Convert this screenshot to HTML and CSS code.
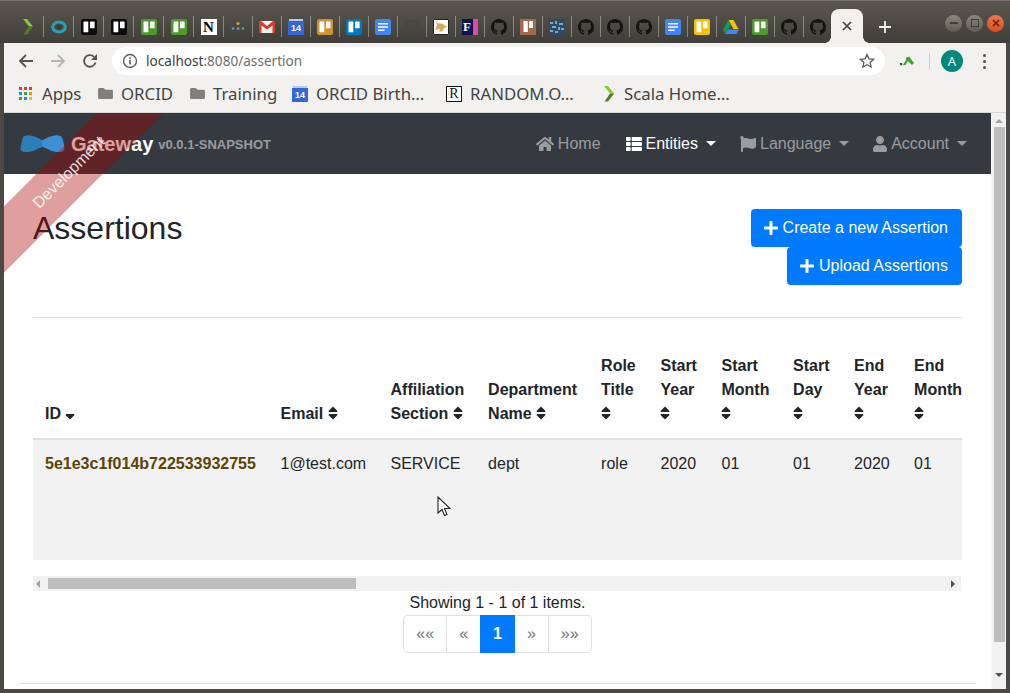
FILE: index.html
```html
<!DOCTYPE html>
<html lang="en">
<head>
<meta charset="utf-8">
<title>Assertions</title>
<link rel="stylesheet" href="styles.css">
</head>
<body>
<svg class="defs" width="0" height="0">
	<symbol id="i-trello" viewBox="0 0 16 16">
		<rect width="16" height="16" rx="2" fill="currentColor"/>
		<rect x="2.5" y="2.5" width="4.8" height="10.8" rx=".6" fill="#fff"/>
		<rect x="9" y="2.5" width="4.6" height="6.8" rx=".6" fill="#fff"/>
	</symbol>
	<symbol id="i-github" viewBox="0 0 16 16">
		<path fill="#15130f" d="M8 0C3.58 0 0 3.58 0 8c0 3.54 2.29 6.53 5.47 7.59.4.07.55-.17.55-.38 0-.19-.01-.82-.01-1.49-2.01.37-2.53-.49-2.69-.94-.09-.23-.48-.94-.82-1.13-.28-.15-.68-.52-.01-.53.63-.01 1.08.58 1.23.82.72 1.21 1.87.87 2.33.66.07-.52.28-.87.51-1.07-1.78-.2-3.64-.89-3.64-3.95 0-.87.31-1.59.82-2.15-.08-.2-.36-1.02.08-2.12 0 0 .67-.21 2.2.82.64-.18 1.32-.27 2-.27.68 0 1.36.09 2 .27 1.53-1.04 2.2-.82 2.2-.82.44 1.1.16 1.92.08 2.12.51.56.82 1.27.82 2.15 0 3.07-1.87 3.75-3.65 3.95.29.25.54.73.54 1.48 0 1.07-.01 1.93-.01 2.2 0 .21.15.46.55.38A8.013 8.013 0 0016 8c0-4.42-3.58-8-8-8z"/>
	</symbol>
	<symbol id="i-docs" viewBox="0 0 16 16">
		<rect width="16" height="16" rx="2" fill="#4285f4"/>
		<path fill="#fff" d="M3 4h10v1.6H3zM3 7.2h10v1.6H3zM3 10.4h6.5V12H3z"/>
	</symbol>
	<symbol id="i-chevron" viewBox="0 0 12 16">
		<path fill="#8bc53f" d="M1 0h4l6 7.500H7z"/>
		<path fill="#4f7f1c" d="M7 7.500h4L5 15.500H1.500L4 12z"/>
	</symbol>
	<symbol id="i-cal" viewBox="0 0 16 16">
		<path fill="#3367d6" d="M0 2h16v14H0z"/>
		<path fill="#bcc8e6" d="M1 0h14v2H1z"/>
	</symbol>
	<symbol id="i-folder" viewBox="0 0 16 14">
		<path fill="#7f7f7f" d="M1.500 1h4.500l2 2h6.500a1.500 1.500 0 0 1 1.500 1.500v7a1.500 1.500 0 0 1-1.500 1.500h-13A1.500 1.500 0 0 1 0 11.500v-9A1.500 1.500 0 0 1 1.500 1z"/>
	</symbol>
	<symbol id="i-sort" viewBox="0 0 320 512">
		<path fill="currentColor" d="M41 288h238c21.400 0 32.100 25.900 17 41L177 448c-9.400 9.400-24.600 9.400-33.900 0L24 329c-15.100-15.100-4.400-41 17-41zm255-105L177 64c-9.400-9.400-24.600-9.400-33.900 0L24 183c-15.100 15.100-4.400 41 17 41h238c21.400 0 32.100-25.900 17-41z"/>
	</symbol>
	<symbol id="i-plus" viewBox="0 0 448 512">
		<path fill="currentColor" d="M416 208H272V64c0-17.670-14.330-32-32-32h-32c-17.670 0-32 14.330-32 32v144H32c-17.670 0-32 14.330-32 32v32c0 17.670 14.330 32 32 32h144v144c0 17.670 14.330 32 32 32h32c17.670 0 32-14.330 32-32V304h144c17.670 0 32-14.330 32-32v-32c0-17.670-14.330-32-32-32z"/>
	</symbol>
</svg>

<div class="tabstrip">
	<div class="tab wide"><svg class="fav-chev"><use href="#i-chevron"/></svg></div>
	<div class="tab wide">
		<svg class="fav" viewBox="0 0 16 16"><ellipse cx="8" cy="8" rx="6.300" ry="5" fill="none" stroke="#2b9fb3" stroke-width="3"/><circle cx="8" cy="8" r="2.400" fill="#3b3a36"/></svg>
	</div>
	<div class="tab wide"><svg class="fav trello-black"><use href="#i-trello"/></svg></div>
	<div class="tab wide"><svg class="fav trello-black"><use href="#i-trello"/></svg></div>
	<div class="tab wide"><svg class="fav trello-green"><use href="#i-trello"/></svg></div>
	<div class="tab wide"><svg class="fav trello-green"><use href="#i-trello"/></svg></div>
	<div class="tab wide"><span class="fav-notion">N</span></div>
	<div class="tab">
		<svg class="fav" viewBox="0 0 16 16"><circle cx="8" cy="4.500" r="1.500" fill="#d2a24c"/><circle cx="3" cy="9.500" r="1.300" fill="#5b9bb5"/><circle cx="8" cy="9.500" r="1.500" fill="#5b9bb5"/><circle cx="13" cy="9.500" r="1.300" fill="#5b9bb5"/></svg>
	</div>
	<div class="tab">
		<svg class="fav" viewBox="0 0 16 16"><path fill="#f1efec" d="M0 2h16v12H0z"/><path fill="#d23f31" d="M0 2h2l6 5 6-5h2v12h-2.500V6.500L8 10.500 2.500 6.500V14H0z"/></svg>
	</div>
	<div class="tab"><span class="fav-cal"><svg class="fav-bg"><use href="#i-cal"/></svg><span class="fav-cal-num">14</span></span></div>
	<div class="tab"><svg class="fav trello-orange"><use href="#i-trello"/></svg></div>
	<div class="tab"><svg class="fav trello-blue"><use href="#i-trello"/></svg></div>
	<div class="tab"><svg class="fav"><use href="#i-docs"/></svg></div>
	<div class="tab">
		<svg class="fav" viewBox="0 0 16 16"><circle cx="8" cy="8" r="6" fill="none" stroke="#474640" stroke-width="3"/></svg>
	</div>
	<div class="tab">
		<svg class="fav" viewBox="0 0 16 16"><path fill="#fff" d="M0 0h16v16H0z"/><path fill="none" stroke="#222" d="M.5.500h15v15H.500z"/><path fill="#d9a95b" d="M2 11l2-5-1-3 3 1.500h3l3 2 2 1-3 2-2 3H6l1-2.500z"/></svg>
	</div>
	<div class="tab">
		<svg class="fav" viewBox="0 0 16 16"><path fill="#0b1450" d="M0 0h11v16H0z"/><path fill="#e0489b" d="M11 0h5v16h-5z"/></svg>
		<span class="fav-f">F</span>
	</div>
	<div class="tab"><svg class="fav"><use href="#i-github"/></svg></div>
	<div class="tab">
		<svg class="fav" viewBox="0 0 16 16"><path fill="#a06a4c" d="M0 0h16v16H0z"/><rect x="3.500" y="2" width="4.300" height="11" rx=".5" fill="#fff"/><rect x="9" y="2" width="4" height="7" rx=".5" fill="#fff"/></svg>
	</div>
	<div class="tab">
		<svg class="fav" viewBox="0 0 16 16"><path fill="#2f4a63" d="M0 0h16v16H0z"/><path fill="#7fa8c4" d="M1 3h3v2H1zM6 2h2v3H6zM10 4h4v2h-4zM3 7h4v2H3zM9 8h2v3H9zM12 9h3v2h-3zM1 11h3v2H1zM6 12h3v2H6z"/></svg>
	</div>
	<div class="tab"><svg class="fav"><use href="#i-github"/></svg></div>
	<div class="tab"><svg class="fav"><use href="#i-github"/></svg></div>
	<div class="tab"><svg class="fav"><use href="#i-github"/></svg></div>
	<div class="tab"><svg class="fav"><use href="#i-docs"/></svg></div>
	<div class="tab"><svg class="fav trello-yellow"><use href="#i-trello"/></svg></div>
	<div class="tab">
		<svg class="fav" viewBox="0 0 16 16"><path fill="#ffc107" d="M5.500 1h5l5 9h-5z"/><path fill="#0f9d58" d="M5.500 1L0 10.500 2.500 15l5.300-9.500z"/><path fill="#4285f4" d="M5 10.500h11L13.500 15h-11z"/></svg>
	</div>
	<div class="tab"><svg class="fav trello-green"><use href="#i-trello"/></svg></div>
	<div class="tab"><svg class="fav"><use href="#i-github"/></svg></div>
	<div class="tab"><svg class="fav"><use href="#i-github"/></svg></div>

	<div class="tab-active">
		<svg width="10" height="10" viewBox="0 0 10 10"><path d="M1 1l8 8M9 1l-8 8" stroke="#45433f" stroke-width="1.700"/></svg>
	</div>
	<svg class="newtab" width="12" height="12" viewBox="0 0 12 12"><path d="M6 0v12M0 6h12" stroke="#f2f1f0" stroke-width="1.800"/></svg>

	<div class="winbtns">
		<span class="winbtn"><span class="win-min"></span></span>
		<span class="winbtn"><span class="win-max"></span></span>
		<span class="winbtn win-close">
			<svg width="8" height="8" viewBox="0 0 8 8"><path d="M1 1l6 6M7 1L1 7" stroke="#5c2410" stroke-width="1.500"/></svg>
		</span>
	</div>
</div>

<div class="toolbar">
	<span class="toolbtn">
		<svg width="16" height="16" viewBox="0 0 16 16"><path d="M15 8H2M8 2L2 8l6 6" fill="none" stroke="#55534f" stroke-width="1.800"/></svg>
	</span>
	<span class="toolbtn">
		<svg width="16" height="16" viewBox="0 0 16 16"><path d="M1 8h13M8 2l6 6-6 6" fill="none" stroke="#b5b4b2" stroke-width="1.800"/></svg>
	</span>
	<span class="toolbtn">
		<svg width="16" height="16" viewBox="0 0 16 16"><path d="M13.500 9.500A5.800 5.800 0 1 1 12 3.800" fill="none" stroke="#55534f" stroke-width="1.800"/><path d="M15 1v6H9z" fill="#55534f"/></svg>
	</span>
	<div class="omnibox">
		<svg width="16" height="16" viewBox="0 0 16 16"><circle cx="8" cy="8" r="6.500" fill="none" stroke="#5f5d59" stroke-width="1.400"/><path d="M7.200 7h1.600v4.500H7.200zM7.200 4.200h1.600v1.600H7.200z" fill="#5f5d59"/></svg>
		<span class="url">localhost<span class="url-rest">:8080/assertion</span></span>
		<svg class="star" width="16" height="16" viewBox="0 0 16 16"><path d="M8 1.500l1.950 4.300 4.650.5-3.500 3.100 1 4.600L8 11.700l-4.100 2.300 1-4.600-3.500-3.100 4.650-.5z" fill="none" stroke="#5f5d59" stroke-width="1.300"/></svg>
	</div>
	<span class="ext">
		<svg width="14" height="9" viewBox="0 0 14 9"><path fill="#1e5c1a" d="M0 6h2.200v2.200H0z"/><path fill="#3aa52f" d="M3 8l3-5h2.500l-3 5zM5.500 2L7 0h2.500l4.500 6-2 2z"/></svg>
	</span>
	<span class="toolsep"></span>
	<span class="avatar-wrap"><span class="avatar">A</span></span>
	<span class="menudots"><i></i><i></i><i></i></span>
</div>

<div class="bookmarks">
	<span class="bm">
		<svg class="bm-apps" width="14" height="14" viewBox="0 0 14 14">
			<path fill="#e53935" d="M0 0h3v3H0zM5 0h3v3H5zM10 0h3v3h-3z"/>
			<path fill="#1e88e5" d="M0 5h3v3H0z"/><path fill="#43a047" d="M5 5h3v3H5z"/><path fill="#fb8c00" d="M10 5h3v3h-3z"/>
			<path fill="#43a047" d="M0 10h3v3H0z"/><path fill="#1e88e5" d="M5 10h3v3H5z"/><path fill="#fdb300" d="M10 10h3v3h-3z"/>
		</svg>
		<span class="bm-label">Apps</span>
	</span>
	<span class="bm"><svg class="bm-icon" width="15" height="13"><use href="#i-folder"/></svg><span class="bm-label">ORCID</span></span>
	<span class="bm"><svg class="bm-icon" width="15" height="13"><use href="#i-folder"/></svg><span class="bm-label">Training</span></span>
	<span class="bm"><span class="fav-cal"><svg class="fav-bg"><use href="#i-cal"/></svg><span class="fav-cal-num">14</span></span><span class="bm-label">ORCID Birth…</span></span>
	<span class="bm"><span class="fav-r">R</span><span class="bm-label">RANDOM.O…</span></span>
	<span class="bm"><svg class="bm-chev"><use href="#i-chevron"/></svg><span class="bm-label">Scala Home…</span></span>
</div>

<div class="page">
	<div class="viewport">
		<div class="ribbon"><span class="ribbon-text">Development</span></div>

		<nav class="navbar">
			<a class="brand">
				<svg class="logo" width="45" height="19" viewBox="0 0 45 19">
					<path fill="#2c7db8" d="M6 1.500C12 .5 17 3.500 23 6.500v6C17 15 12 18.500 5 18c-3 0-4.500-1.500-4.500-3.500C1 11 1.500 7 3 3.500 3.500 2.500 4.500 2 6 1.500z"/>
					<path fill="#3f8fd4" d="M39 1.500C33 .5 28 3.500 22 6.500v6c6 2.500 11 6 18 5.500 3 0 4.500-1.500 4.500-3.500C44 11 43.500 7 42 3.500 41.500 2.500 40.500 2 39 1.500z"/>
				</svg>
				<span class="brand-title">Gateway</span>
				<span class="brand-version">v0.0.1-SNAPSHOT</span>
			</a>
			<ul class="nav">
				<li class="nav-item nav-home">
					<svg class="nav-icon home-icon" viewBox="0 0 576 512"><path fill="currentColor" d="M280.370 148.260L96 300.110V464a16 16 0 0 0 16 16l112.060-.29a16 16 0 0 0 15.920-16V368a16 16 0 0 1 16-16h64a16 16 0 0 1 16 16v95.640a16 16 0 0 0 16 16.050L464 480a16 16 0 0 0 16-16V300L295.670 148.260a12.190 12.190 0 0 0-15.300 0zM571.600 251.470L488 182.560V44.050a12 12 0 0 0-12-12h-56a12 12 0 0 0-12 12v72.610L318.470 43a48 48 0 0 0-61 0L4.340 251.470a12 12 0 0 0-1.600 16.900l25.500 31A12 12 0 0 0 45.150 301l235.220-193.740a12.190 12.190 0 0 1 15.300 0L530.900 301a12 12 0 0 0 16.900-1.600l25.500-31a12 12 0 0 0-1.700-16.930z"/></svg>
					<span>Home</span>
				</li>
				<li class="nav-item active">
					<svg class="nav-icon" viewBox="0 0 512 512"><path fill="currentColor" d="M149.333 216v80c0 13.255-10.745 24-24 24H24c-13.255 0-24-10.745-24-24v-80c0-13.255 10.745-24 24-24h101.333c13.255 0 24 10.745 24 24zM0 376v80c0 13.255 10.745 24 24 24h101.333c13.255 0 24-10.745 24-24v-80c0-13.255-10.745-24-24-24H24c-13.255 0-24 10.745-24 24zM125.333 32H24C10.745 32 0 42.745 0 56v80c0 13.255 10.745 24 24 24h101.333c13.255 0 24-10.745 24-24V56c0-13.255-10.745-24-24-24zm80 448H488c13.255 0 24-10.745 24-24v-80c0-13.255-10.745-24-24-24H205.333c-13.255 0-24 10.745-24 24v80c0 13.255 10.745 24 24 24zm-24-424v80c0 13.255 10.745 24 24 24H488c13.255 0 24-10.745 24-24V56c0-13.255-10.745-24-24-24H205.333c-13.255 0-24 10.745-24 24zm24 264H488c13.255 0 24-10.745 24-24v-80c0-13.255-10.745-24-24-24H205.333c-13.255 0-24 10.745-24 24v80c0 13.255 10.745 24 24 24z"/></svg>
					<span>Entities</span><i class="caret"></i>
				</li>
				<li class="nav-item">
					<svg class="nav-icon" viewBox="0 0 512 512"><path fill="currentColor" d="M349.565 98.783C295.978 98.783 251.721 64 184.348 64c-24.955 0-47.309 4.384-68.045 12.013a55.947 55.947 0 0 0 3.586-23.562C118.117 24.015 94.806 1.206 66.338.048 34.345-1.254 8 24.296 8 56c0 19.026 9.497 35.825 24 45.945V488c0 13.255 10.745 24 24 24h16c13.255 0 24-10.745 24-24v-94.400c28.311-12.064 63.582-22.122 114.435-22.122 53.588 0 97.844 34.783 165.217 34.783 48.169 0 86.667-16.294 122.505-40.858C506.840 359.452 512 349.571 512 339.045v-243.100c0-23.393-24.269-38.870-45.485-29.016-34.338 15.948-76.454 31.854-116.950 31.854z"/></svg>
					<span>Language</span><i class="caret"></i>
				</li>
				<li class="nav-item">
					<svg class="nav-icon user-icon" viewBox="0 0 448 512"><path fill="currentColor" d="M224 256c70.700 0 128-57.300 128-128S294.700 0 224 0 96 57.300 96 128s57.300 128 128 128zm89.600 32h-16.700c-22.200 10.200-46.900 16-72.900 16s-50.600-5.800-72.900-16h-16.700C60.200 288 0 348.200 0 422.400V464c0 26.500 21.500 48 48 48h352c26.500 0 48-21.500 48-48v-41.600c0-74.200-60.200-134.400-134.400-134.400z"/></svg>
					<span>Account</span><i class="caret"></i>
				</li>
			</ul>
		</nav>

		<main class="content">
			<div class="title-row">
				<h2 class="title">Assertions</h2>
				<div class="actions">
					<a class="btn"><svg class="btn-icon"><use href="#i-plus"/></svg>Create a new Assertion</a>
					<a class="btn"><svg class="btn-icon"><use href="#i-plus"/></svg>Upload Assertions</a>
				</div>
			</div>
			<hr class="rule">

			<div class="table-wrap">
				<table class="table">
					<colgroup>
						<col class="c-id"><col class="c-email"><col class="c-section"><col class="c-dept">
						<col class="c-role"><col class="c-start-y"><col class="c-start-m"><col class="c-start-d">
						<col class="c-end-y"><col class="c-end-m"><col class="c-rest">
					</colgroup>
					<thead>
						<tr>
							<th>ID <svg class="sort" viewBox="0 0 320 512"><path fill="currentColor" d="M41 288h238c21.400 0 32.100 25.900 17 41L177 448c-9.400 9.400-24.600 9.400-33.900 0L24 329c-15.100-15.100-4.400-41 17-41z"/></svg></th>
							<th>Email <svg class="sort"><use href="#i-sort"/></svg></th>
							<th>Affiliation Section <svg class="sort"><use href="#i-sort"/></svg></th>
							<th>Department Name <svg class="sort"><use href="#i-sort"/></svg></th>
							<th>Role Title <svg class="sort"><use href="#i-sort"/></svg></th>
							<th>Start Year <svg class="sort"><use href="#i-sort"/></svg></th>
							<th>Start Month <svg class="sort"><use href="#i-sort"/></svg></th>
							<th>Start Day <svg class="sort"><use href="#i-sort"/></svg></th>
							<th>End Year <svg class="sort"><use href="#i-sort"/></svg></th>
							<th>End Month <svg class="sort"><use href="#i-sort"/></svg></th>
							<th></th>
						</tr>
					</thead>
					<tbody>
						<tr>
							<td><a class="id-link">5e1e3c1f014b722533932755</a></td>
							<td>1@test.com</td>
							<td>SERVICE</td>
							<td>dept</td>
							<td>role</td>
							<td>2020</td>
							<td>01</td>
							<td>01</td>
							<td>2020</td>
							<td>01</td>
							<td></td>
						</tr>
					</tbody>
				</table>
			</div>
			<div class="hscroll">
				<i class="arrow-left"></i>
				<span class="hscroll-track"><span class="hscroll-thumb"></span></span>
				<i class="arrow-right"></i>
			</div>

			<div class="count">Showing 1 - 1 of 1 items.</div>
			<ul class="pagination">
				<li class="page-link">««</li>
				<li class="page-link">«</li>
				<li class="page-link current">1</li>
				<li class="page-link">»</li>
				<li class="page-link">»»</li>
			</ul>
			<hr class="footer-rule">
		</main>

		<svg class="cursor" width="14" height="21" viewBox="0 0 14 21"><path d="M1 1v16l4-3.500 2.500 6 2.500-1-2.500-6H13z" fill="#fff" stroke="#222" stroke-width="1.100"/></svg>
	</div>

	<div class="vscroll">
		<i class="arrow-up"></i>
		<span class="vscroll-thumb"></span>
		<i class="arrow-down"></i>
	</div>
</div>
</body>
</html>
```

FILE: styles.css
```css
* {
	box-sizing: border-box;
	padding: 0;
	margin: 0;
}
html, body {
	width: 1010px;
	height: 693px;
	overflow: hidden;
}
body {
	background: #4b4943;
	font-family: "Liberation Sans", Arial, sans-serif;
	font-size: 16px;
	line-height: 24px;
	color: #212529;
}
li {
	list-style: none;
}
.defs {
	display: block;
	height: 0;
}

/* browser tabs */
.tabstrip {
	display: flex;
	align-items: center;
	height: 43px;
	padding: 10px 0 0 13px;
	background: linear-gradient(#5b5750, #403e39);
	border-top: 1px solid #77746d;
}
.tab {
	position: relative;
	display: flex;
	align-items: center;
	justify-content: center;
	width: 29px;
	height: 21px;
	border-left: 1px solid rgba(255, 255, 255, .35);
	margin-top: -1px;
}
.tab.wide {
	width: 30px;
}
.tab:first-child {
	border-left: 0;
}
.fav {
	width: 16px;
	height: 16px;
}
.fav-chev {
	width: 12px;
	height: 16px;
}
.trello-black { color: #0c0c0c; }
.trello-green { color: #4c9a2a; }
.trello-orange { color: #d29034; }
.trello-blue { color: #0079bf; }
.trello-yellow { color: #f2c200; }
.fav-notion {
	width: 16px;
	height: 16px;
	background: #fff;
	color: #000;
	font: bold 15px/16px "Liberation Serif", serif;
	text-align: center;
}
.fav-f {
	position: absolute;
	left: 7px;
	top: 2px;
	color: #fff;
	font: bold 13px/17px "Liberation Serif", serif;
}
.fav-cal {
	position: relative;
	display: inline-block;
	width: 16px;
	height: 16px;
}
.fav-bg {
	display: block;
	width: 16px;
	height: 16px;
}
.fav-cal-num {
	position: absolute;
	left: 0;
	right: 0;
	top: 4px;
	color: #fff;
	font: bold 9px/11px "Liberation Sans", sans-serif;
	text-align: center;
}
.tab-active {
	position: relative;
	display: flex;
	align-items: center;
	justify-content: center;
	align-self: flex-end;
	width: 32px;
	height: 34px;
	margin-left: -1px;
	padding-bottom: 1px;
	background: #f2f1f0;
	border-radius: 8px 8px 0 0;
}
/* curved feet of the active tab */
.tab-active::before,
.tab-active::after {
	content: "";
	position: absolute;
	bottom: 0;
	width: 6px;
	height: 6px;
}
.tab-active::before {
	left: -6px;
	background: radial-gradient(circle at 0 0, transparent 5.500px, #f2f1f0 6px);
}
.tab-active::after {
	right: -6px;
	background: radial-gradient(circle at 100% 0, transparent 5.500px, #f2f1f0 6px);
}
.newtab {
	margin: -1px 0 0 16px;
}
.winbtns {
	display: flex;
	gap: 4px;
	margin: -8px 0 0 auto;
	padding-right: 6px;
}
.winbtn {
	display: flex;
	align-items: center;
	justify-content: center;
	width: 17px;
	height: 17px;
	border-radius: 50%;
	background: linear-gradient(#8a877f, #5f5c55);
}
.win-min {
	width: 8px;
	height: 2px;
	background: #403e39;
}
.win-max {
	width: 8px;
	height: 8px;
	border: 1px solid #403e39;
}
.win-close {
	background: linear-gradient(#f0764a, #d84f1f);
}

/* address bar */
.toolbar {
	display: flex;
	align-items: center;
	height: 36px;
	margin: 0 4px;
	padding-left: 6px;
	background: #f2f1f0;
	color: #55534f;
}
.toolbtn {
	display: flex;
	align-items: center;
	justify-content: center;
	width: 32px;
}
.omnibox {
	display: flex;
	align-items: center;
	gap: 8px;
	width: 773px;
	height: 28px;
	margin-left: 6px;
	padding: 0 10px;
	background: #fff;
	border-radius: 14px;
}
.url {
	font: 13.600px/20px "Noto Sans", sans-serif;
	color: #3e3d3a;
}
.url-rest {
	color: #6f6d69;
}
.star {
	margin-left: auto;
}
.ext {
	display: flex;
	justify-content: center;
	width: 44px;
}
.toolsep {
	width: 1px;
	height: 16px;
	background: #cfcecb;
}
.avatar-wrap {
	display: flex;
	justify-content: center;
	width: 44px;
}
.avatar {
	width: 22px;
	height: 22px;
	border-radius: 50%;
	background: #00897b;
	color: #fff;
	font: 13px/22px "Noto Sans", sans-serif;
	text-align: center;
}
.menudots {
	display: flex;
	flex-direction: column;
	align-items: center;
	gap: 3px;
	width: 20px;
}
.menudots i {
	width: 3px;
	height: 3px;
	border-radius: 50%;
	background: #55534f;
}

/* bookmarks */
.bookmarks {
	display: flex;
	align-items: center;
	height: 34px;
	margin: 0 4px;
	padding: 0 0 4px 15px;
	background: #f2f1f0;
	border-bottom: 1px solid #d8d7d4;
}
.bm {
	display: flex;
	align-items: center;
	gap: 8px;
	margin-right: 17px;
}
.bm-label {
	font: 16.800px/20px "Noto Sans", sans-serif;
	color: #45443f;
	white-space: nowrap;
}
/* ubuntu ui font is not available, keep labels on the widths it had */
.bm:nth-child(1) .bm-label { width: 39px; }
.bm:nth-child(2) .bm-label { width: 53px; }
.bm:nth-child(3) .bm-label { width: 62px; }
.bm:nth-child(4) .bm-label { width: 112px; }
.bm:nth-child(5) .bm-label { width: 110px; }
.bm:nth-child(2) { margin-right: 16px; }
.bm:nth-child(4) { margin-right: 18px; }
.bm:nth-child(5) { margin-right: 23px; }
.bm-apps {
	margin-right: 1px;
}
.bm-chev {
	width: 12px;
	height: 16px;
	margin-right: 1px;
}
.fav-r {
	width: 16px;
	height: 16px;
	border: 1px solid #111;
	background: #fff;
	color: #111;
	font: 14px/14px "Liberation Serif", serif;
	text-align: center;
}

/* page */
.page {
	display: flex;
	height: 576px;
	margin: 0 4px;
	background: #fff;
}
.viewport {
	position: relative;
	width: 987px;
	overflow: hidden;
}
.vscroll {
	display: flex;
	flex-direction: column;
	align-items: center;
	width: 15px;
	background: #f1f1f1;
	border-left: 1px solid #f8f8f8;
}
.vscroll-thumb {
	width: 11px;
	height: 515px;
	margin: 4px 0 31px;
	background: #bdbdbd;
}
.arrow-up {
	width: 0;
	height: 0;
	margin-top: 6px;
	border: 4px solid transparent;
	border-top: 0;
	border-bottom: 4px solid #a3a3a3;
}
.arrow-down {
	width: 0;
	height: 0;
	border: 4px solid transparent;
	border-bottom: 0;
	border-top: 4px solid #505050;
}

/* dev ribbon */
.ribbon {
	position: absolute;
	left: -84px;
	top: 37px;
	z-index: 10;
	width: 300px;
	height: 47px;
	background: rgba(170, 0, 0, .375);
	text-align: center;
	line-height: 44px;
	transform: rotate(-45deg);
	pointer-events: none;
}
.ribbon-text {
	color: rgba(255, 255, 255, .85);
}

/* navbar */
.navbar {
	display: flex;
	align-items: center;
	justify-content: space-between;
	height: 61px;
	padding: 0 12px 0 16px;
	background: #343a40;
}
.brand {
	display: flex;
	align-items: center;
	color: #fff;
}
.logo {
	margin-right: 6px;
}
.brand-title {
	font-size: 20px;
	font-weight: bold;
}
.brand-version {
	margin: 2px 0 0 5px;
	font-size: 13px;
	font-weight: bold;
	color: rgba(255, 255, 255, .5);
}
.nav {
	display: flex;
}
.nav-item {
	display: flex;
	align-items: center;
	gap: 4px;
	padding: 0 12px;
	color: rgba(255, 255, 255, .5);
}
.nav-item.active {
	color: #fff;
}
.nav-home {
	margin-right: 1px;
}
.nav-icon {
	width: 16px;
	height: 16px;
}
.home-icon {
	width: 18px;
}
.user-icon {
	width: 14px;
}
.caret {
	width: 0;
	height: 0;
	margin-left: 4px;
	border: 5px solid transparent;
	border-bottom: 0;
	border-top: 5px solid currentColor;
}

/* content */
.content {
	padding: 35px 29px 0;
}
.title-row {
	display: flex;
	justify-content: space-between;
}
.title {
	font-size: 32px;
	font-weight: normal;
	line-height: 38px;
}
.actions {
	display: flex;
	flex-direction: column;
	align-items: flex-end;
}
.btn {
	display: flex;
	align-items: center;
	height: 38px;
	padding: 0 14px 0 13px;
	background: #007bff;
	color: #fff;
	border-radius: 4px;
}
.btn-icon {
	width: 14px;
	height: 16px;
	margin-right: 5px;
}
.rule {
	height: 1px;
	margin: 32px 0 24px;
	border: 0;
	background: #dfdfdf;
}

/* table */
.table-wrap {
	overflow: hidden;
}
.table {
	width: 2714px;
	table-layout: fixed;
	border-collapse: collapse;
}
.c-id { width: 235.500px; }
.c-email { width: 110px; }
.c-section { width: 97.600px; }
.c-dept { width: 113px; }
.c-role { width: 59.400px; }
.c-start-y { width: 61px; }
.c-start-m { width: 71.600px; }
.c-start-d { width: 61px; }
.c-end-y { width: 60px; }
.c-end-m { width: 72px; }
th {
	padding: 12px;
	vertical-align: bottom;
	text-align: left;
	border-bottom: 2px solid #dee2e6;
}
td {
	height: 121px;
	padding: 12px;
	vertical-align: top;
	background: #f2f2f2;
}
.sort {
	display: inline-block;
	width: 10px;
	height: 16px;
	vertical-align: -2px;
}
.id-link {
	font-weight: bold;
	color: #5a4408;
}

/* table scrollbar */
.hscroll {
	display: flex;
	align-items: center;
	height: 15px;
	margin: 16px 1px 0 0;
	background: #f1f1f1;
}
.hscroll-track {
	flex: 1;
	height: 11px;
	margin: 0 6px 0 8px;
}
.hscroll-thumb {
	display: block;
	width: 308px;
	height: 11px;
	background: #bdbdbd;
}
.arrow-left {
	width: 0;
	height: 0;
	margin-left: 3px;
	border: 4px solid transparent;
	border-left: 0;
	border-right: 4px solid #a3a3a3;
}
.arrow-right {
	width: 0;
	height: 0;
	margin-right: 6px;
	border: 4px solid transparent;
	border-right: 0;
	border-left: 4px solid #505050;
}

.count {
	text-align: center;
}
.pagination {
	display: flex;
	justify-content: center;
}
.page-link {
	height: 38px;
	padding: 0 12px;
	margin-left: -1px;
	border: 1px solid #dee2e6;
	color: #6c757d;
	line-height: 36px;
	background: #fff;
}
.page-link:first-child {
	margin-left: 0;
	border-radius: 4px 0 0 4px;
}
.page-link:last-child {
	border-radius: 0 4px 4px 0;
}
.page-link.current {
	position: relative;
	border-color: #007bff;
	background: #007bff;
	color: #fff;
	font-weight: bold;
}
.footer-rule {
	height: 1px;
	margin: 30px -14px 0;
	border: 0;
	background: #dfdfdf;
}

.cursor {
	position: absolute;
	left: 433px;
	top: 383px;
	z-index: 11;
}
```
